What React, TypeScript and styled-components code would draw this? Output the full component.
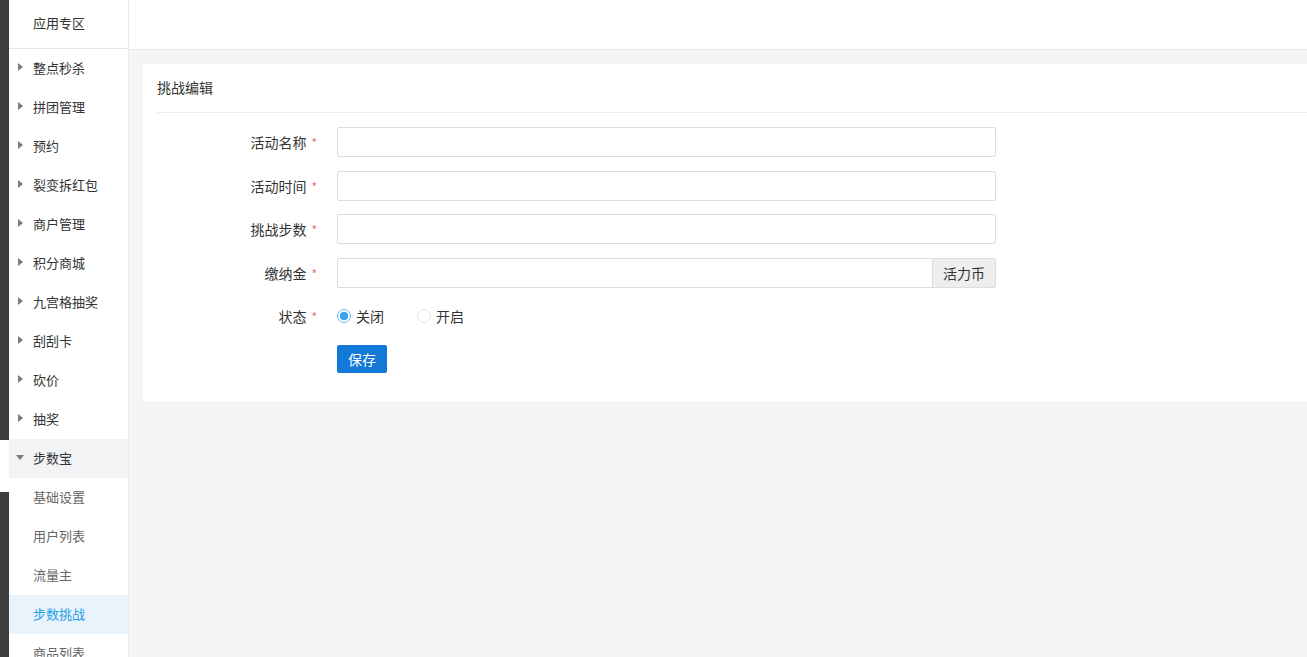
import React from "react";
import styled, { createGlobalStyle } from "styled-components";

const GlobalStyle = createGlobalStyle`
  html, body {
    margin: 0;
    padding: 0;
    height: 100%;
    overflow: hidden;
  }
  body {
    font-family: "Noto Sans CJK SC", "Noto Sans", sans-serif;
    color: #333;
    background: #fff;
  }
`;

const menu = [
  "整点秒杀",
  "拼团管理",
  "预约",
  "裂变拆红包",
  "商户管理",
  "积分商城",
  "九宫格抽奖",
  "刮刮卡",
  "砍价",
  "抽奖",
];

const subMenu = ["基础设置", "用户列表", "流量主", "步数挑战", "商品列表"];

const fields = ["活动名称", "活动时间", "挑战步数"];

const App = () => {
  return (
    <Page>
      <GlobalStyle />
      <Strip />
      <Sidebar>
        <SideHead>应用专区</SideHead>
        {menu.map((m) => (
          <MenuItem key={m}>
            <Caret />
            {m}
          </MenuItem>
        ))}
        <MenuItem $open>
          <Caret $down />
          步数宝
        </MenuItem>
        {subMenu.map((s) => (
          <SubItem key={s} $active={s === "步数挑战"}>
            {s}
          </SubItem>
        ))}
      </Sidebar>
      <Main>
        <TopBar />
        <Content>
          <Card>
            <CardTitle>挑战编辑</CardTitle>
            <Form>
              {fields.map((f) => (
                <Row key={f}>
                  <Label>
                    {f}
                    <Star>*</Star>
                  </Label>
                  <Input />
                </Row>
              ))}
              <Row>
                <Label>
                  缴纳金
                  <Star>*</Star>
                </Label>
                <Group>
                  <GroupInput />
                  <Addon>活力币</Addon>
                </Group>
              </Row>
              <Row>
                <Label>
                  状态
                  <Star>*</Star>
                </Label>
                <Radios>
                  <Radio>
                    <Dot $checked />
                    关闭
                  </Radio>
                  <Radio>
                    <Dot />
                    开启
                  </Radio>
                </Radios>
              </Row>
              <Row $short>
                <Label />
                <SaveButton>保存</SaveButton>
              </Row>
            </Form>
          </Card>
        </Content>
      </Main>
    </Page>
  );
};

const Page = styled.div`
  display: flex;
  height: 100vh;
  width: 100vw;
  overflow: hidden;
`;

const Strip = styled.div`
  width: 9px;
  flex-shrink: 0;
  background: linear-gradient(
    to bottom,
    #3e3e3e 0,
    #3e3e3e 440px,
    #ffffff 440px,
    #ffffff 492px,
    #3e3e3e 492px
  );
`;

const Sidebar = styled.div`
  width: 119px;
  flex-shrink: 0;
  background: #fff;
  border-right: 1px solid #e8e8e8;
  display: flex;
  flex-direction: column;
  font-size: 13px;
`;

const SideHead = styled.div`
  height: 49px;
  flex-shrink: 0;
  box-sizing: border-box;
  padding: 0 0 3px 24px;
  border-bottom: 1px solid #e8e8e8;
  display: flex;
  align-items: center;
  color: #333;
`;

const MenuItem = styled.div<{ $open?: boolean }>`
  height: 39px;
  flex-shrink: 0;
  box-sizing: border-box;
  display: flex;
  align-items: center;
  padding: 0 0 3px 8px;
  color: #333;
  background: ${(p) => (p.$open ? "#f2f3f5" : "transparent")};
`;

const Caret = styled.span<{ $down?: boolean }>`
  width: 16px;
  display: flex;
  padding-left: ${(p) => (p.$down ? "-1px" : "1px")};
  box-sizing: border-box;
  &::before {
    content: "";
    display: block;
    border-style: solid;
    border-color: transparent;
    ${(p) =>
      p.$down
        ? `border-width: 5px 4px 0 4px; border-top-color: #7a7a7a; margin-left: -1px;`
        : `border-width: 4px 0 4px 5px; border-left-color: #7a7a7a;`}
  }
`;

const SubItem = styled.div<{ $active?: boolean }>`
  height: 39px;
  flex-shrink: 0;
  box-sizing: border-box;
  display: flex;
  align-items: center;
  padding: 0 0 3px 24px;
  color: ${(p) => (p.$active ? "#1e9fe6" : "#666")};
  background: ${(p) => (p.$active ? "#e8f3fc" : "transparent")};
`;

const Main = styled.div`
  flex: 1;
  display: flex;
  flex-direction: column;
  min-width: 0;
  background: #f4f5f7;
`;

const TopBar = styled.div`
  height: 49px;
  flex-shrink: 0;
  background: #fff;
  border-bottom: 1px solid #e8e8e8;
`;

const Content = styled.div`
  padding: 14px 0 14px 14px;
`;

const Card = styled.div`
  background: #fff;
  padding: 0 0 28px 14px;
`;

const CardTitle = styled.div`
  height: 49px;
  box-sizing: border-box;
  padding-bottom: 2px;
  display: flex;
  align-items: center;
  font-size: 14px;
  color: #333;
  border-bottom: 1px solid #ececec;
`;

const Form = styled.div`
  display: flex;
  flex-direction: column;
  gap: 13.5px;
  padding-top: 14px;
`;

const Row = styled.div<{ $short?: boolean }>`
  display: flex;
  align-items: center;
  height: ${(p) => (p.$short ? "28px" : "30px")};
`;

const Label = styled.div`
  width: 180px;
  flex-shrink: 0;
  box-sizing: border-box;
  padding-right: 20px;
  text-align: right;
  font-size: 14px;
  color: #333;
`;

const Star = styled.span`
  color: #f56c6c;
  font-size: 12px;
  margin-left: 5px;
`;

const Input = styled.input`
  width: 659px;
  height: 30px;
  box-sizing: border-box;
  border: 1px solid #dcdcdc;
  border-radius: 2px;
  outline: none;
  padding: 0 10px;
  font-size: 14px;
`;

const Group = styled.div`
  display: flex;
  width: 659px;
  height: 30px;
`;

const GroupInput = styled.input`
  flex: 1;
  min-width: 0;
  box-sizing: border-box;
  border: 1px solid #dcdcdc;
  border-right: none;
  border-radius: 2px 0 0 2px;
  outline: none;
  padding: 0 10px;
`;

const Addon = styled.div`
  width: 64px;
  box-sizing: border-box;
  display: flex;
  align-items: center;
  justify-content: center;
  background: #eeeeee;
  border: 1px solid #dcdcdc;
  border-radius: 0 2px 2px 0;
  font-size: 14px;
  color: #333;
`;

const Radios = styled.div`
  display: flex;
  align-items: center;
  gap: 33px;
`;

const Radio = styled.label`
  display: flex;
  align-items: center;
  font-size: 14px;
  color: #333;
`;

const Dot = styled.span<{ $checked?: boolean }>`
  width: 14px;
  height: 14px;
  box-sizing: border-box;
  border-radius: 50%;
  margin-right: 5px;
  border: 1px solid ${(p) => (p.$checked ? "#5fb6f5" : "#e3e3e3")};
  background: ${(p) =>
    p.$checked ? "radial-gradient(circle, #3ca3f2 0 4px, #fff 4.5px)" : "#fff"};
`;

const SaveButton = styled.button`
  height: 28px;
  width: 50px;
  border: none;
  border-radius: 2px;
  background: #1279d9;
  color: #fff;
  font-family: inherit;
  font-size: 14px;
  padding: 0;
  cursor: pointer;
`;

export default App;
